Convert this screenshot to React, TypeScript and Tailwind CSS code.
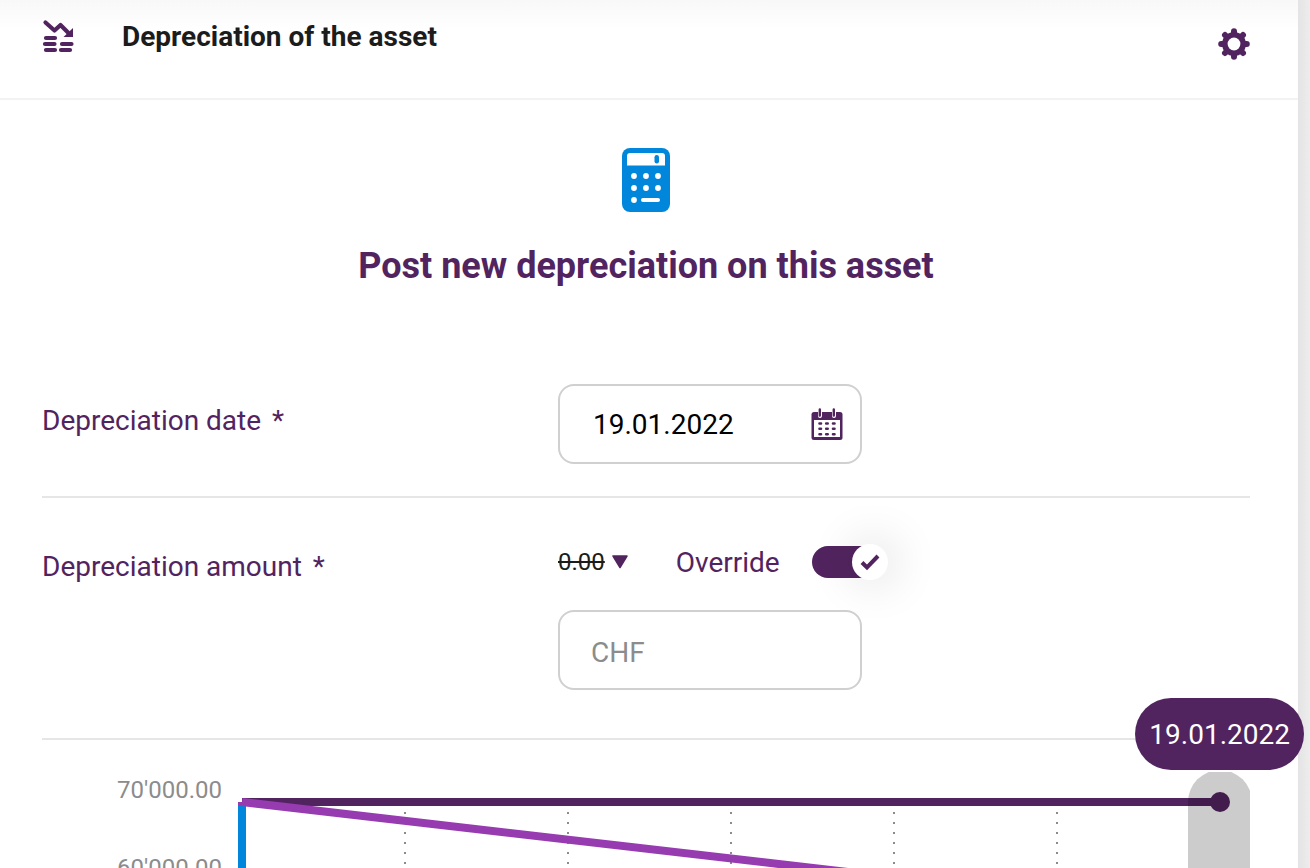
import { useState } from "react";

const axisLabels = ["70'000.00", "60'000.00"];
const gridLines = [167, 330, 493, 656, 819];

function DepreciationIcon() {
  return (
    <svg viewBox="0 0 32 34" className="h-[34px] w-8 text-[#52245f]" fill="none" stroke="currentColor" strokeLinecap="round" strokeWidth="4.200" aria-hidden="true">
      <path d="M3.500 3.500 12.500 11.500l6-5.500L26 13.500" strokeLinejoin="round" />
      <path d="M31 9v9h-9.500z" fill="currentColor" stroke="none" />
      <path d="M4 19h9M3 25h9.500M4 31h9M20 25h9.500M19 31h9" />
    </svg>
  );
}

function GearIcon() {
  return (
    <svg viewBox="-16 -16 32 32" className="size-8" aria-hidden="true">
      <g fill="currentColor" stroke="currentColor" strokeLinecap="round">
        <circle r="12" stroke="none" />
        <path strokeWidth="6" d="M0-12.800V12.800M-12.800 0H12.800" />
        <path strokeWidth="6" d="M-9-9 9 9M9-9-9 9" />
      </g>
      <circle r="6.400" fill="white" />
    </svg>
  );
}

function CalculatorIcon() {
  return (
    <svg viewBox="0 0 48 64" className="h-16 w-12" aria-hidden="true">
      <rect width="48" height="64" rx="8" fill="#0086da" />
      <path d="M8 5h32a3 3 0 0 1 3 3v9.500H5V8a3 3 0 0 1 3-3Z" fill="white" />
      <rect x="32.500" y="7" width="4.500" height="8.500" rx="2.200" fill="#0086da" />
      <g fill="white">
        <circle cx="12" cy="28" r="2.900" />
        <circle cx="24" cy="28" r="2.900" />
        <circle cx="36" cy="28" r="2.900" />
        <circle cx="12" cy="40" r="2.900" />
        <circle cx="24" cy="40" r="2.900" />
        <circle cx="36" cy="40" r="2.900" />
        <circle cx="12" cy="52" r="2.900" />
        <rect x="19" y="50" width="19" height="4" rx="2" />
      </g>
    </svg>
  );
}

function CalendarIcon() {
  return (
    <svg viewBox="0 0 32 32" className="size-8" aria-hidden="true">
      <rect x="0.500" y="4" width="31" height="28" rx="2.500" fill="currentColor" />
      <path d="M3 12h26v17H3z" fill="white" />
      <path d="M9 3v5M23 3v5" stroke="white" strokeWidth="4" strokeLinecap="round" />
      <path d="M8.800 1.500v6M22.800 1.500v6" stroke="currentColor" strokeWidth="2.400" strokeLinecap="round" />
      <path
        d="M8.500 15.500h1.500M15.200 15.500h1.500M22 15.500h1.500M8.500 20.800h1.500M15.200 20.800h1.500M22 20.800h1.500M8.500 26.200h1.500M15.200 26.200h1.500M22 26.200h1.500"
        stroke="currentColor"
        strokeWidth="2.600"
        strokeLinecap="round"
      />
    </svg>
  );
}

function DepreciationChart({ date }: { date: string }) {
  return (
    <section className="relative flex items-start pt-8" aria-label="Depreciation chart">
      <ul className="flex w-[196px] shrink-0 flex-col gap-[50px] pt-1 pr-4 text-right text-2xl leading-7 text-[#8c8c8c]">
        {axisLabels.map((label) => (
          <li key={label}>{label}</li>
        ))}
      </ul>
      <svg viewBox="0 0 1012 400" className="min-w-0 flex-1" aria-hidden="true">
        {gridLines.map((x) => (
          <path key={x} d={`M${x} 40V400`} stroke="#8c8c8c" strokeWidth="2" strokeDasharray="2 8" />
        ))}
        <path d="M4 30v370" stroke="#0086da" strokeWidth="8" />
        <path d="M4 30h978" stroke="#52245f" strokeWidth="8" />
        <path d="M0 30h8v4H0z" fill="#963bb0" />
        <path d="M4 30 982 143" stroke="#963bb0" strokeWidth="8" />
        <circle cx="982" cy="30" r="10" fill="#52245f" />
        <rect x="950" y="-2" width="64" height="500" rx="32" fill="black" fillOpacity="0.2" />
      </svg>
      <span className="absolute -top-[42px] -right-[54px] rounded-full bg-[#52245f] px-[14px] pt-[17px] pb-[15px] text-[28px] leading-10 text-white">
        {date}
      </span>
    </section>
  );
}

export default function App() {
  const [date, setDate] = useState("19.01.2022");
  const [amount, setAmount] = useState("");
  const [override, setOverride] = useState(true);

  return (
    <div className="flex h-screen overflow-hidden bg-[#ebebeb] font-['Roboto',sans-serif] text-[28px] leading-8 text-[#52245f]">
      <main className="min-w-0 flex-1 bg-white">
        <header className="flex h-[100px] items-start border-b-2 border-[#f2f2f2] bg-linear-to-b from-[#f8f8f8] to-white to-30% pr-12 pl-[42px]">
          <div className="pt-[19px]">
            <DepreciationIcon />
          </div>
          <h1 className="flex-1 pt-[21px] pl-12 font-bold text-[#1c1c1c]">Depreciation of the asset</h1>
          <button type="button" aria-label="Settings" className="mt-7">
            <GearIcon />
          </button>
        </header>

        <form className="pr-12 pl-[42px]" onSubmit={(e) => e.preventDefault()}>
          <div className="flex flex-col items-center pt-12">
            <CalculatorIcon />
            <h2 className="pt-8 text-4xl leading-[44px] font-bold">Post new depreciation on this asset</h2>
          </div>

          <div className="mt-24 grid grid-cols-[516px_1fr] items-start border-b-2 border-[#e6e6e6] pb-8">
            <label htmlFor="date" className="pt-[21px]">
              Depreciation date <span className="pl-1">*</span>
            </label>
            <div className="flex h-20 w-[304px] items-center rounded-2xl border-2 border-[#d0d0d0] pr-[17px] pl-[33px]">
              <input
                id="date"
                type="text"
                value={date}
                onChange={(e) => setDate(e.target.value)}
                className="min-w-0 flex-1 pt-[2px] text-black outline-none"
              />
              <button type="button" aria-label="Choose date">
                <CalendarIcon />
              </button>
            </div>
          </div>

          <div className="grid grid-cols-[516px_1fr] items-start border-b-2 border-[#e6e6e6] pt-[46px] pb-12">
            <label htmlFor="amount" className="pt-[7px]">
              Depreciation amount <span className="pl-1">*</span>
            </label>
            <div>
              <div className="flex h-9 items-center">
                <button type="button" className="flex items-center gap-[6px] text-2xl text-[#1c1c1c]">
                  <s>0.00</s>
                  <svg viewBox="0 0 18 14" className="h-[14px] w-[18px]" aria-hidden="true">
                    <path d="M2 1h14L9 12.500Z" fill="#52245f" stroke="#52245f" strokeWidth="1.500" strokeLinejoin="round" />
                  </svg>
                </button>
                <label className="flex cursor-pointer items-center pl-[47px]">
                  <span className="pt-[2px]">Override</span>
                  <input
                    type="checkbox"
                    role="switch"
                    checked={override}
                    onChange={(e) => setOverride(e.target.checked)}
                    className="peer sr-only"
                  />
                  <span className="ml-8 flex h-8 w-[72px] items-center rounded-full bg-gray-300 peer-checked:justify-end peer-checked:bg-[#52245f]">
                    <span className="-mr-1 flex size-9 shrink-0 items-center justify-center rounded-full bg-white shadow-[4px_0_48px_rgba(0,0,0,0.2)]">
                      {override && (
                        <svg viewBox="0 0 20 18" className="h-[18px] w-5" aria-hidden="true">
                          <path d="m2 9.500 5 5L18 3" fill="none" stroke="#52245f" strokeWidth="4" />
                        </svg>
                      )}
                    </span>
                  </span>
                </label>
              </div>
              <input
                id="amount"
                type="text"
                placeholder="CHF"
                value={amount}
                onChange={(e) => setAmount(e.target.value)}
                className="mt-[30px] block h-20 w-[304px] rounded-2xl border-2 border-[#d0d0d0] px-[31px] pt-1 outline-none placeholder:text-[#8c8c8c]"
              />
            </div>
          </div>

          <DepreciationChart date={date} />
        </form>
      </main>
      <div className="w-3 shrink-0 bg-linear-to-r from-[#e4e4e4] to-[#ededed]" />
    </div>
  );
}
